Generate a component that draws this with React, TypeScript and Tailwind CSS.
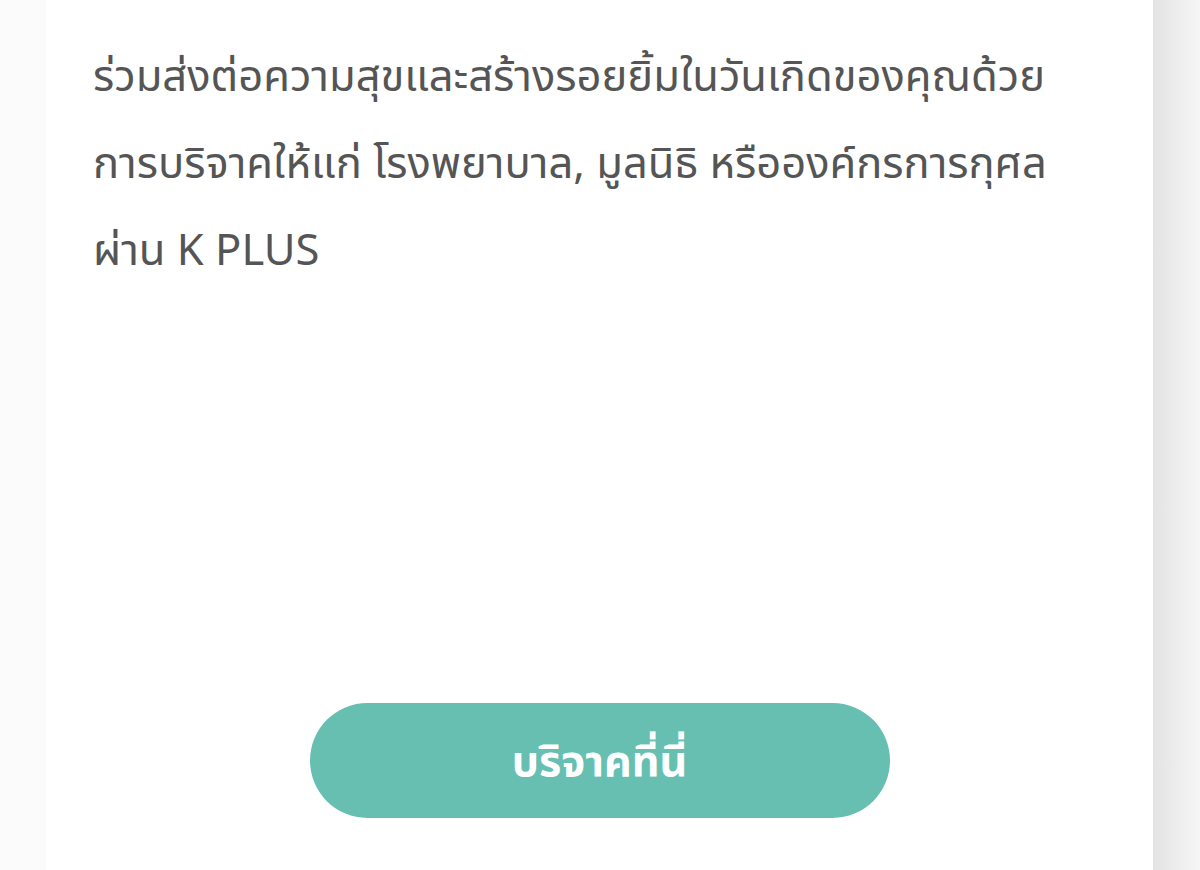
export default function App() {
  const lines = [
    "ร่วมส่งต่อความสุขและสร้างรอยยิ้มในวันเกิดของคุณด้วย",
    "การบริจาคให้แก่ โรงพยาบาล, มูลนิธิ หรือองค์กรการกุศล",
    "ผ่าน K PLUS",
  ];
  return (
    <div className="flex h-[870px] w-[1200px] overflow-hidden bg-[#fbfbfb]">
      <div className="w-[46px] shrink-0 bg-[#fbfbfb]" />
      <div
        className="flex w-[1107px] shrink-0 flex-col bg-white"
        style={{ fontFamily: '"Noto Sans", "Noto Sans Thai", Tahoma, sans-serif' }}
      >
        <div className="pl-[47px] pt-[31px] text-[43.5px] leading-[87px] text-[#555555]">
          {lines.map((l) => (
            <div key={l} className="whitespace-nowrap">{l}</div>
          ))}
        </div>
        <div className="mt-[411px] flex justify-center">
          <button className="flex h-[115px] w-[580px] items-center justify-center rounded-full bg-[#67bfb1] text-[43px] font-bold text-white">
            บริจาคที่นี่
          </button>
        </div>
      </div>
      <div className="flex-1 bg-gradient-to-r from-[#e3e3e3] to-[#f6f6f6]" />
    </div>
  );
}
